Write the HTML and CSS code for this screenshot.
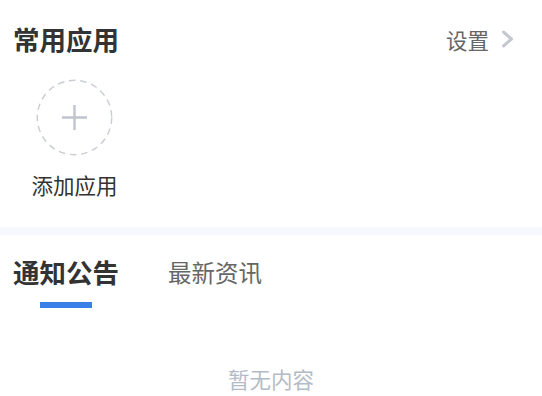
FILE: index.html
```html
<!DOCTYPE html>
<html lang="zh-CN">
<head>
    <meta charset="UTF-8">
    <meta name="viewport" content="width=device-width, initial-scale=1.0">
    <title>工作台</title>
    <link rel="stylesheet" href="styles.css">
</head>
<body>
    <section class="apps">
        <header class="apps-header">
            <h2 class="apps-title">常用应用</h2>
            <a class="settings-link">
                <span>设置</span>
                <svg class="chevron" width="14" height="18" viewBox="0 0 14 18">
                    <path d="M2.5 2 L10.5 9 L2.5 16" fill="none" stroke="#c4c8d0" stroke-width="3" stroke-linecap="round" stroke-linejoin="round"/>
                </svg>
            </a>
        </header>

        <div class="app-list">
            <div class="app-item">
                <div class="app-add">
                    <svg class="app-ring" width="77" height="77" viewBox="0 0 77 77">
                        <circle cx="38.5" cy="38.5" r="37.2" fill="none" stroke="#c8ccd4" stroke-width="1.4" stroke-dasharray="6.5 4.8"/>
                    </svg>
                    <svg class="app-plus" width="27" height="27" viewBox="0 0 27 27">
                        <path d="M13.5 1 V26 M1 13.5 H26" stroke="#c0c4cc" stroke-width="2.4"/>
                    </svg>
                </div>
                <div class="app-label">添加应用</div>
            </div>
        </div>
    </section>

    <div class="divider"></div>

    <section class="notices">
        <nav class="tabs">
            <div class="tab active">通知公告</div>
            <div class="tab">最新资讯</div>
        </nav>
        <div class="empty">暂无内容</div>
    </section>
</body>
</html>
```

FILE: styles.css
```css
* {
    margin: 0;
    padding: 0;
    box-sizing: border-box;
    font-family: "Noto Sans CJK SC", "Noto Sans", sans-serif;
}

:root {
    --text-primary: #333333;
    --text-secondary: #666666;
    --text-muted: #b3bcc6;
    --band: #f5f8fc;
    --blue: #3a7fe8;
}

body {
    background: #ffffff;
    color: var(--text-primary);
    overflow: hidden;
}

.apps {
    padding: 0 13px 27px;
}

.apps-header {
    display: flex;
    justify-content: space-between;
    align-items: center;
    height: 80px;
    padding-bottom: 2px;
}

.apps-title {
    font-size: 26.5px;
    font-weight: bold;
    line-height: 36px;
    color: var(--text-primary);
}

.settings-link {
    display: flex;
    align-items: center;
    gap: 12px;
    font-size: 21.5px;
    color: var(--text-secondary);
    padding-right: 14px;
}

.chevron {
    display: block;
}

.app-list {
    display: flex;
    padding-left: 18px;
}

.app-item {
    display: flex;
    flex-direction: column;
    align-items: center;
    width: 87px;
}

.app-add {
    position: relative;
    width: 77px;
    height: 77px;
    margin-top: -1px;
    display: flex;
    align-items: center;
    justify-content: center;
}

.app-ring {
    position: absolute;
    top: 0;
    left: 0;
}

.app-plus {
    display: block;
}

.app-label {
    margin-top: 14px;
    font-size: 21.5px;
    line-height: 30px;
    color: var(--text-primary);
    white-space: nowrap;
}

.divider {
    height: 8px;
    background: var(--band);
}

.notices {
    padding: 19px 13px 0;
}

.tabs {
    display: flex;
    gap: 49px;
    align-items: center;
}

.tab {
    position: relative;
    font-size: 23.5px;
    line-height: 36px;
    color: var(--text-secondary);
    padding-bottom: 18px;
}

.tab.active {
    font-size: 26.5px;
    font-weight: bold;
    color: var(--text-primary);
}

.tab.active::after {
    content: "";
    position: absolute;
    left: 50%;
    bottom: 0;
    width: 52px;
    height: 6px;
    margin-left: -26px;
    background: var(--blue);
}

.empty {
    margin-top: 56px;
    text-align: center;
    font-size: 21.5px;
    line-height: 30px;
    color: var(--text-muted);
}
```
